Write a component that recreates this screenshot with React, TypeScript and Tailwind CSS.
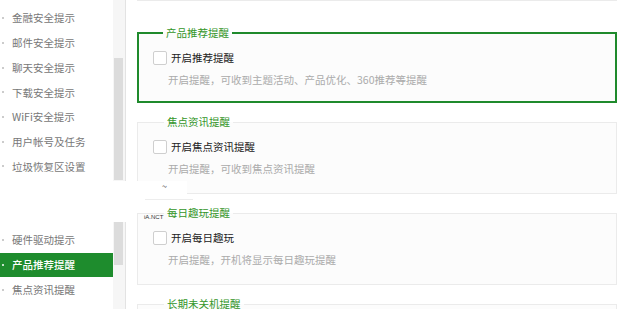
import React from "react";

const FONT = { fontFamily: '"Noto Sans CJK SC", "Noto Sans", sans-serif' };

const topItems = [
  "金融安全提示",
  "邮件安全提示",
  "聊天安全提示",
  "下载安全提示",
  "WiFi安全提示",
  "用户帐号及任务",
  "垃圾恢复区设置",
];

function NavItem({ label, active }: { label: string; active?: boolean }) {
  return (
    <div
      className={
        "flex h-[24.7px] items-center text-[10.5px] " +
        (active ? "bg-[#1e8c2d] font-medium text-white" : "text-[#777]")
      }
    >
      <span className="flex w-[12px] pl-[2px]">
        <span className={"h-[2px] w-[2px] rounded-full " + (active ? "bg-white" : "bg-[#bbb]")} />
      </span>
      <span>{label}</span>
    </div>
  );
}

function Section({
  title,
  label,
  desc,
  active,
}: {
  title: string;
  label: string;
  desc: string;
  active?: boolean;
}) {
  return (
    <fieldset
      className={
        "bg-[#fcfcfc] " +
        (active
          ? "border-2 border-[#1f8a2c] px-[14px] pb-[13px]"
          : "border border-[#ebebeb] px-[15px] pb-[16px]")
      }
    >
      <legend
        className={
          "px-[3px] text-[10.5px] leading-[16px] text-[#34962a] " +
          (active ? "ml-[10px]" : "ml-[11px]")
        }
      >
        {title}
      </legend>
      <div className="mt-[8px] flex h-[18px] items-center gap-[4px]">
        <span className="h-[14px] w-[14px] rounded-[2px] border border-[#cfcfcf] bg-white" />
        <span className="text-[10.5px] text-[#222]">{label}</span>
      </div>
      <div className="ml-[15px] mt-[5px] text-[10.5px] leading-[16px] text-[#ababab]">
        {desc}
      </div>
    </fieldset>
  );
}

export default function App() {
  return (
    <div className="relative flex h-[309px] w-[620px] overflow-hidden bg-white" style={FONT}>
      {/* Sidebar */}
      <aside className="flex w-[113px] shrink-0 flex-col pt-[6px]">
        {topItems.map((t) => (
          <NavItem key={t} label={t} />
        ))}
        <div className="h-[49px]" />
        <NavItem label="硬件驱动提示" />
        <NavItem label="产品推荐提醒" active />
        <NavItem label="焦点资讯提醒" />
      </aside>

      {/* Scrollbar */}
      <div className="flex w-[13px] shrink-0 flex-col border-r border-[#e3e3e3] bg-[#f6f6f6] px-[1px]">
        <div className="mt-[58px] h-[122px] w-[9px] bg-[#dcdcdc]" />
        <div className="mt-[40px] h-[45px] w-[9px] bg-[#dcdcdc]" />
      </div>

      {/* Content */}
      <main className="flex flex-1 flex-col pl-[11px] pr-[3px]">
        <div className="h-[10px] border-x border-b border-[#ebebeb] bg-[#fcfcfc]" />
        <div className="mt-[24px] flex flex-col gap-[11px]">
          <Section
            active
            title="产品推荐提醒"
            label="开启推荐提醒"
            desc="开启提醒，可收到主题活动、产品优化、360推荐等提醒"
          />
          <Section
            title="焦点资讯提醒"
            label="开启焦点资讯提醒"
            desc="开启提醒，可收到焦点资讯提醒"
          />
          <Section
            title="每日趣玩提醒"
            label="开启每日趣玩"
            desc="开启提醒，开机将显示每日趣玩提醒"
          />
          <Section title="长期未关机提醒" label="开启长期未关机提醒" desc="" />
        </div>
      </main>

      {/* Capture glitch band */}
      <div className="absolute left-0 top-[181px] h-[41px] w-[137px] bg-white" />
      <div className="absolute left-[137px] top-[181px] h-[26px] w-[50px] bg-white" />
      <div className="absolute left-[162px] top-[182px] text-[9px] leading-none text-[#444]">~</div>
      <div className="absolute left-[145px] top-[199px] h-px w-[48px] bg-[#ededed]" />
      <div className="absolute left-[144px] top-[214px] font-['Liberation_Sans',sans-serif] text-[6px] leading-none text-[#333]">
        iA.NCT
      </div>
    </div>
  );
}
